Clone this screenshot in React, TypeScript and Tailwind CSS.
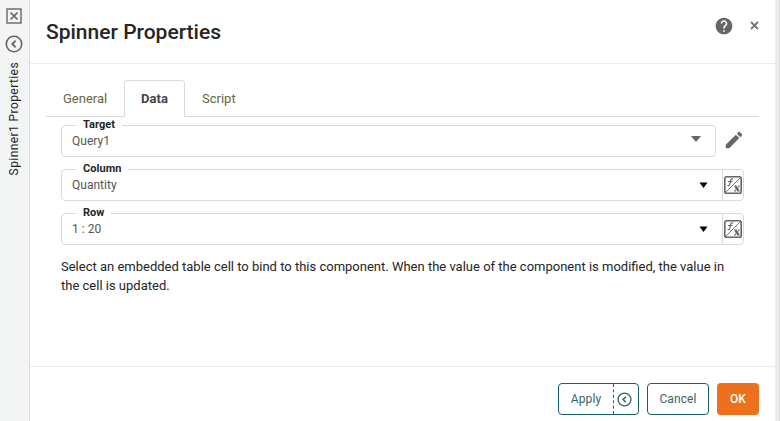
import React from "react";

function BackIcon({ size }: { size: number }) {
  return (
    <svg width={size} height={size} viewBox="0 0 18 18" fill="none" stroke="currentColor">
      <circle cx="9" cy="9" r="7.7" strokeWidth="1.6" />
      <path d="M10.6 5.7 7.3 9l3.3 3.3" strokeWidth="1.9" />
    </svg>
  );
}

function FormulaIcon() {
  return (
    <svg width="18" height="18" viewBox="0 0 18 18" fill="none" stroke="#666">
      <rect x="0.8" y="0.8" width="16.4" height="16.4" rx="1.8" strokeWidth="1.6" />
      <path d="M1.5 16.5 16.5 1.5" strokeWidth="0.9" />
      <path d="M9.2 3.2C7.8 2.2 6.9 3 6.6 4.6L5.9 8C5.6 9.5 4.8 9.9 3.6 9.3M4 5.5h4.6" strokeWidth="1.2" />
      <path d="M11.3 10.2l3.2 4.6" strokeWidth="2.3" />
      <path d="M15 10.2l-4.2 4.6M10.3 10h2M13.8 10h1.8M10.2 15h1.8M13.6 15h2" strokeWidth="1" />
    </svg>
  );
}

function Field({ label, value, formula }: { label: string; value: string; formula?: boolean }) {
  return (
    <div className="flex h-8 items-center">
      <div
        className={
          "relative flex h-8 items-center rounded border border-[#dadcdb] " +
          (formula ? "w-[683px]" : "w-[655px]")
        }
      >
        <span className="absolute -top-[9px] left-[14px] bg-white px-[7px] text-[11px] leading-4 font-bold tracking-[0.05px] text-[#252525]">
          {label}
        </span>
        <span className="flex-1 pl-[10px] text-[12px] leading-4 tracking-[0.02px] text-[#555]">{value}</span>
        {formula ? (
          <>
            <svg className="mr-[14px]" width="9" height="6" viewBox="0 0 9 6">
              <path d="M0.5 0.5h8L4.5 6z" fill="#000" />
            </svg>
            <span className="flex h-full w-[21px] items-center justify-center border-l border-[#dadcdb]">
              <FormulaIcon />
            </span>
          </>
        ) : (
          <svg className="mr-[13px] mb-1" width="12" height="6" viewBox="0 0 12 6">
            <path d="M1 0h10L6 6z" fill="#666" />
          </svg>
        )}
      </div>
      {!formula && (
        <svg className="mb-[3px] ml-[7px]" width="22" height="22" viewBox="0 0 24 24" fill="#666">
          <path d="M3 17.25V21h3.75L17.81 9.94l-3.75-3.75L3 17.25zM20.71 7.04a1 1 0 0 0 0-1.41l-2.34-2.34a1 1 0 0 0-1.41 0l-1.83 1.83 3.75 3.75 1.83-1.83z" />
        </svg>
      )}
    </div>
  );
}

export default function App() {
  return (
    <div className="flex h-[421px] w-[780px] overflow-hidden bg-white font-['Roboto',sans-serif] text-[#252525]">
      <aside className="flex w-[30px] shrink-0 flex-col items-center border-r border-[#dadcdb] bg-[#f3f5f4] pt-2 pr-px text-[#666]">
        <svg width="16" height="16" viewBox="0 0 16 16" fill="none" stroke="currentColor">
          <rect x="1" y="1" width="14" height="14" strokeWidth="1.4" />
          <path d="m4.5 4.5 7 7m0-7-7 7" strokeWidth="1.7" />
        </svg>
        <div className="mt-[11px]">
          <BackIcon size={18} />
        </div>
        <span className="mt-[9px] rotate-180 text-[12px] leading-4 tracking-[0.42px] text-[#252525] [writing-mode:vertical-rl]">
          Spinner1 Properties
        </span>
      </aside>
      <main className="flex flex-1 flex-col">
        <header className="flex h-16 shrink-0 items-start border-b border-[#ededed] pl-4">
          <h1 className="flex-1 pt-[18px] text-[21px] leading-7 font-medium">Spinner Properties</h1>
          <svg className="mt-4 mr-4" width="20" height="20" viewBox="0 0 24 24" fill="#666">
            <path d="M12 2C6.48 2 2 6.48 2 12s4.48 10 10 10 10-4.48 10-10S17.52 2 12 2zm1 17h-2v-2h2v2zm2.07-7.75-.9.92C13.45 12.9 13 13.5 13 15h-2v-.5c0-1.1.45-2.1 1.17-2.83l1.24-1.26c.37-.36.59-.86.59-1.41 0-1.1-.9-2-2-2s-2 .9-2 2H8c0-2.21 1.79-4 4-4s4 1.79 4 4c0 .88-.36 1.68-.93 2.25z" />
          </svg>
          <svg className="mt-[21px] mr-4" width="9" height="9" viewBox="0 0 9 9" stroke="#777" strokeWidth="1.8">
            <path d="m1 1 7 7m0-7L1 8" />
          </svg>
        </header>
        <section className="flex-1 px-4 pt-4">
          <nav className="flex h-[37px] text-[13px] leading-[37px] text-[#69653d]">
            <span className="w-[78px] border-b border-[#dadcdb] pl-[17px]">General</span>
            <span className="w-[61px] rounded-t border border-b-0 border-[#dadcdb] text-center leading-[35px] font-bold text-[#444]">
              Data
            </span>
            <span className="flex-1 border-b border-[#dadcdb] pl-[17px]">Script</span>
          </nav>
          <div className="flex flex-col gap-3 pt-2 pl-[15px]">
            <Field label="Target" value="Query1" />
            <Field label="Column" value="Quantity" formula />
            <Field label="Row" value="1 : 20" formula />
          </div>
          <p className="mt-3 pl-[15px] text-[13px] leading-[19px]">
            Select an embedded table cell to bind to this component. When the value of the component is modified, the value in
            <br />
            the cell is updated.
          </p>
        </section>
        <footer className="flex h-[55px] shrink-0 items-start justify-end gap-2 border-t border-[#ededed] pt-4 pr-4 text-[12px] tracking-[0.08px] text-[#396563]">
          <div className="flex h-8 w-[81px] rounded border border-[#176360]">
            <button className="flex-1">Apply</button>
            <button className="flex w-[25px] items-center justify-center border-l border-dashed border-[#176360] pr-[3px]">
              <BackIcon size={15} />
            </button>
          </div>
          <button className="h-8 w-[62px] rounded border border-[#176360]">Cancel</button>
          <button className="h-8 w-[42px] rounded bg-[#ed711c] font-medium text-white">OK</button>
        </footer>
      </main>
      <div className="w-[5px] shrink-0 border-r border-[#dadcdb] bg-[#eceeed]" />
    </div>
  );
}
